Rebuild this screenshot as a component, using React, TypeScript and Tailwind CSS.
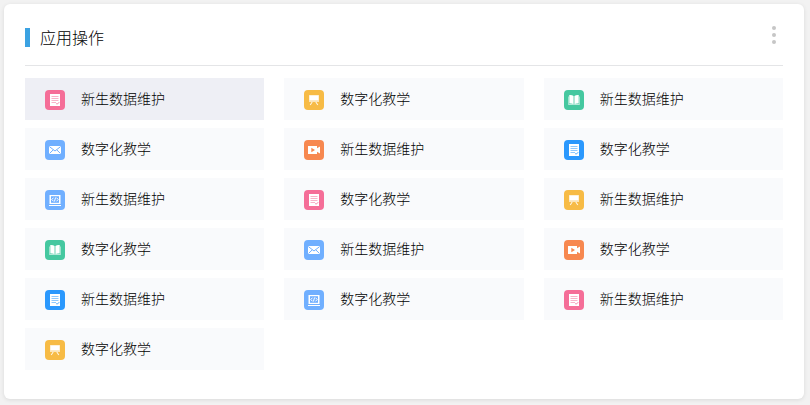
import React from 'react';

type IconKind = 'note' | 'board' | 'book' | 'mail' | 'video' | 'code';

interface Item {
  icon: IconKind;
  color: string;
  label: string;
}

const A = '新生数据维护';
const B = '数字化教学';

const variants: { icon: IconKind; color: string }[] = [
  { icon: 'note', color: 'bg-[#f56e98]' },
  { icon: 'board', color: 'bg-[#f7bb45]' },
  { icon: 'book', color: 'bg-[#45c8a0]' },
  { icon: 'mail', color: 'bg-[#70afff]' },
  { icon: 'video', color: 'bg-[#f78850]' },
  { icon: 'note', color: 'bg-[#2b98fd]' },
  { icon: 'code', color: 'bg-[#70afff]' },
];

const items: Item[] = Array.from({ length: 16 }, (_, i) => ({
  ...variants[i % 7],
  label: i % 2 === 0 ? A : B,
}));

function Glyph({ kind, tint }: { kind: IconKind; tint: string }) {
  switch (kind) {
    case 'note':
      return (
        <>
          <path d="M5 4h10v12H5z" fill="#fff" />
          <path d="M6.5 6.5h7M6.5 8.5h7M6.5 10.5h7M6.5 12.5h4.5" stroke={tint} strokeWidth=".7" opacity=".75" />
          <path d="M11.300 13.500l.9.700 2-2" stroke={tint} strokeWidth=".9" fill="none" />
        </>
      );
    case 'board':
      return (
        <>
          <path d="M5 5h10v7H5z" fill="#fff" opacity=".6" />
          <path d="M5.500 5.500h9v4.700h-9z" fill="#fff" />
          <path d="M8.200 12L6.200 15M11.800 12l2 3" stroke="#fff" strokeWidth="1.100" opacity=".85" />
        </>
      );
    case 'book':
      return (
        <>
          <path d="M4.200 6.500H5V14h4.400l.6.500.6-.5H15V6.500h.8V15H4.200z" fill="#fff" opacity=".6" />
          <path d="M5.300 5q2.800-.2 4.300 1v8.200Q8 13.200 5.300 13.600zM14.700 5q-2.800-.2-4.300 1v8.200q1.600-1 4.300-.6z" fill="#fff" />
        </>
      );
    case 'mail':
      return (
        <>
          <path d="M4 6h12v8H4z" fill="#fff" />
          <path d="M4.300 6.500L10 11l5.700-4.500M4.500 13.500l3.700-3.600M15.500 13.500l-3.700-3.600" stroke={tint} strokeWidth="1" fill="none" />
        </>
      );
    case 'video':
      return (
        <>
          <path d="M4 6h9v2.200L16 6.500v7l-3-1.700V14H4z" fill="#fff" />
          <path d="M7.300 7.800l3.700 2.200-3.700 2.200z" fill={tint} />
        </>
      );
    case 'code':
      return (
        <>
          <path d="M4.500 5h11v9h-11z" fill="#fff" />
          <path d="M6 6.200h8v6.600H6z" fill={tint} />
          <path d="M8.500 7.700L6.800 9.500l1.700 1.800M11.500 7.700l1.700 1.800-1.700 1.800M10.600 7.500l-1.200 4" stroke="#fff" strokeWidth="1" fill="none" />
          <path d="M4 15h12v1H4z" fill="#fff" />
        </>
      );
  }
}

function Tile({ item, active }: { item: Item; active: boolean }) {
  return (
    <div className={`flex h-[42px] pl-5 ${active ? 'bg-[#eeeff5]' : 'bg-[#f9fafc]'}`}>
      <span className={`mt-3 size-5 shrink-0 rounded-[4px] ${item.color}`}>
        <svg viewBox="0 0 20 20" className="size-5">
          <Glyph kind={item.icon} tint={item.color.slice(4, -1)} />
        </svg>
      </span>
      <span className="ml-4 text-sm leading-[40px] font-light text-black">{item.label}</span>
    </div>
  );
}

export default function App() {
  return (
    <div className="h-[405px] w-[810px] bg-[#f2f2f2] pt-1 pl-1 font-['Noto_Sans_CJK_SC',sans-serif]">
      <section className="h-[395px] w-[800px] rounded-md bg-white px-[21px] shadow-[0_1px_4px_rgba(0,0,0,0.1)]">
        <header className="flex h-[62px] items-start justify-between border-b border-[#e4e5e7]">
          <div className="flex items-start pt-[21px]">
            <span className="mt-[3px] h-[19px] w-[5px] bg-[#3ba2e2]" />
            <h2 className="ml-2.5 text-base leading-6 font-light text-black">应用操作</h2>
          </div>
          <div className="mt-[22px] mr-[7px] flex flex-col gap-[3px]">
            <span className="size-1 rounded-full bg-[#c6c6c6]" />
            <span className="size-1 rounded-full bg-[#c6c6c6]" />
            <span className="size-1 rounded-full bg-[#c6c6c6]" />
          </div>
        </header>
        <div className="mt-3 grid grid-cols-3 gap-x-5 gap-y-2">
          {items.map((item, i) => (
            <Tile key={i} item={item} active={i === 0} />
          ))}
        </div>
      </section>
    </div>
  );
}
